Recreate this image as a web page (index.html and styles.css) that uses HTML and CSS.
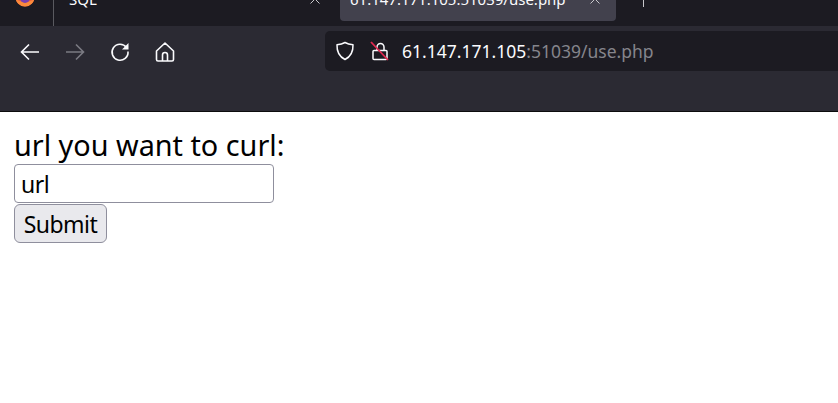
FILE: index.html
```html
<!DOCTYPE html>
<html lang="en">
<head>
    <meta charset="UTF-8">
    <title>use.php</title>
    <link rel="stylesheet" href="styles.css">
</head>
<body>
    <div class="browser">
        <div class="tabbar">
            <div class="tab-logo">
                <svg width="20" height="20" viewBox="0 0 20 20">
                    <circle cx="10" cy="10" r="9.500" fill="#f2603c"/>
                    <path d="M.5 10a9.500 9.500 0 0 0 19 0a9.500 5 0 0 1-19 0z" fill="#fb8a3b"/>
                    <circle cx="10" cy="11" r="5" fill="#7a3fb0"/>
                </svg>
            </div>
            <div class="tab tab-first">
                <span class="tab-title">SQL</span>
                <svg class="tab-close" width="10" height="10" viewBox="0 0 10 10">
                    <path d="M.5.5l9 9M9.500.5l-9 9" stroke="#c8c8cc" stroke-width="1"/>
                </svg>
            </div>
            <div class="tab tab-active">
                <span class="tab-title">61.147.171.105:51039/use.php</span>
                <svg class="tab-close" width="10" height="10" viewBox="0 0 10 10">
                    <path d="M.5.5l9 9M9.500.5l-9 9" stroke="#c8c8cc" stroke-width="1"/>
                </svg>
            </div>
            <div class="tab-new"></div>
        </div>
        <div class="toolbar">
            <div class="nav-buttons">
                <svg class="icon" width="20" height="20" viewBox="0 0 20 20">
                    <path d="M19 10H2M9 2.500L1.500 10L9 17.500" fill="none" stroke="#fbfbfe" stroke-width="1.600"/>
                </svg>
                <svg class="icon" width="20" height="20" viewBox="0 0 20 20">
                    <path d="M1 10h17M11 2.500L18.500 10L11 17.500" fill="none" stroke="#7b7b83" stroke-width="1.600"/>
                </svg>
                <svg class="icon" width="20" height="20" viewBox="0 0 20 20">
                    <path d="M16.500 5.500A8 8 0 1 0 18 9.500" fill="none" stroke="#fbfbfe" stroke-width="1.600"/>
                    <path d="M18.500 1v6.500h-6.500z" fill="#fbfbfe"/>
                </svg>
                <svg class="icon" width="20" height="20" viewBox="0 0 20 20">
                    <path d="M1.500 9L10 1l8.500 8v8.500a1.500 1.500 0 0 1-1.500 1.500H3a1.500 1.500 0 0 1-1.500-1.500zM7.500 19v-6a2.500 2.500 0 0 1 5 0v6" fill="none" stroke="#fbfbfe" stroke-width="1.600" stroke-linejoin="round"/>
                </svg>
            </div>
            <div class="urlbar">
                <svg width="20" height="20" viewBox="0 0 20 20">
                    <path d="M10 1.500c2.500 1.500 5 2 8 2.200c.3 7-2.500 12-8 14.800C4.500 15.700 1.700 10.700 2 3.700c3-.2 5.500-.7 8-2.200z" fill="none" stroke="#fbfbfe" stroke-width="1.500" stroke-linejoin="round"/>
                </svg>
                <svg width="20" height="20" viewBox="0 0 20 20">
                    <path d="M8 9V6a3.500 3.500 0 0 1 7 0v3M5 9.500h12a1 1 0 0 1 1 1v7a1 1 0 0 1-1 1H5a1 1 0 0 1-1-1v-7a1 1 0 0 1 1-1z" fill="none" stroke="#fbfbfe" stroke-width="1.500"/>
                    <path d="M2 1l17 18" stroke="#e22850" stroke-width="1.800"/>
                </svg>
                <span class="url-text">61.147.171.105<span class="url-rest">:51039/use.php</span></span>
            </div>
        </div>
    </div>
    <form class="page">
        <label class="page-label" for="url">url you want to curl:</label>
        <input class="page-input" type="text" id="url" name="url" value="url">
        <button class="page-submit" type="submit">Submit</button>
    </form>
</body>
</html>
```

FILE: styles.css
```css
html, body {
    margin: 0;
    padding: 0;
    background-color: #fff;
}

body {
    font-family: 'Noto Sans', 'Open Sans', sans-serif;
    height: 403px;
    overflow: hidden;
}

.browser {
    border-bottom: 1px solid #0c0c0d;
}

.tabbar {
    height: 26px;
    background-color: #1c1b22;
    display: flex;
    align-items: flex-end;
    overflow: hidden;
    color: #fbfbfe;
    font-size: 15px;
}

.tab-logo {
    width: 54px;
    height: 26px;
    box-sizing: border-box;
    padding: 0 0 19px 15px;
    border-right: 1px solid #5a5a60;
    display: flex;
    align-items: flex-end;
    flex-shrink: 0;
}

.tab {
    display: flex;
    align-items: center;
    justify-content: space-between;
    box-sizing: border-box;
    flex-shrink: 0;
    height: 40px;
    margin-bottom: 5px;
    padding-bottom: 5px;
}

.tab-first {
    width: 286px;
    padding-left: 15px;
    padding-right: 20px;
}

.tab-active {
    width: 276px;
    padding-left: 10px;
    padding-right: 16px;
    background-color: #42414d;
    border-radius: 4px;
}

.tab-new {
    flex-shrink: 0;
    width: 1px;
    height: 7px;
    margin: 0 0 19px 27px;
    background-color: #c8c8cc;
}

.toolbar {
    height: 85px;
    box-sizing: border-box;
    background-color: #2b2a33;
    display: flex;
    align-items: flex-start;
    padding-top: 5px;
}

.nav-buttons {
    display: flex;
    align-items: center;
    gap: 25px;
    width: 325px;
    box-sizing: border-box;
    padding: 11px 0 0 20px;
}

.urlbar {
    flex: 1;
    height: 40px;
    background-color: #1c1b22;
    border-radius: 5px 0 0 5px;
    display: flex;
    align-items: center;
    padding-left: 10px;
    gap: 14px;
}

.url-text {
    font-size: 17.500px;
    color: #fbfbfe;
    margin-left: -1px;
}

.url-rest {
    color: #85858c;
}

.page {
    display: flex;
    flex-direction: column;
    align-items: flex-start;
    padding: 14px 14px 0;
    color: #000;
}

.page-label {
    font-size: 28.800px;
    line-height: 38px;
}

.page-input {
    width: 260px;
    height: 39px;
    box-sizing: border-box;
    padding: 0 6px;
    border: 1px solid #8f8f9d;
    border-radius: 4px;
    font-family: inherit;
    font-size: 23px;
    letter-spacing: -0.5px;
    color: #000;
    margin-bottom: 1px;
}

.page-submit {
    width: 93px;
    height: 39px;
    box-sizing: border-box;
    padding: 0;
    border: 1px solid #8f8f9d;
    border-radius: 6px;
    background-color: #e9e9ed;
    font-family: inherit;
    font-size: 23px;
    letter-spacing: -0.5px;
    color: #000;
}
```
